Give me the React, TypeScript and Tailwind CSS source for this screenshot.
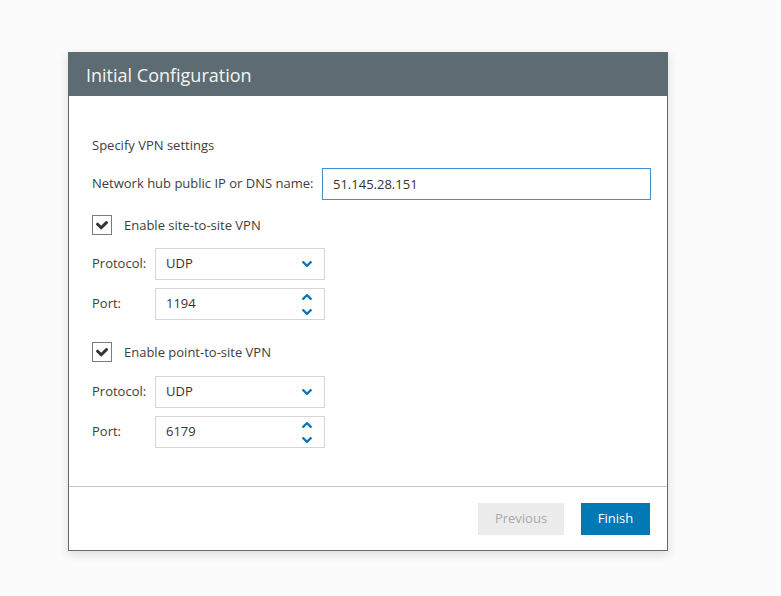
import React, { useState } from "react";

const font = { fontFamily: '"Open Sans", "Liberation Sans", sans-serif' };

function ChevronDown() {
  return (
    <svg width="10" height="6" viewBox="0 0 10 6" fill="none">
      <path d="M1.2 1.2 L5 4.8 L8.8 1.2" stroke="#0b78b8" strokeWidth="2.3" strokeLinecap="round" strokeLinejoin="round" />
    </svg>
  );
}

function ChevronUp() {
  return (
    <svg width="10" height="6" viewBox="0 0 10 6" fill="none">
      <path d="M1.2 4.8 L5 1.2 L8.8 4.8" stroke="#0b78b8" strokeWidth="2.3" strokeLinecap="round" strokeLinejoin="round" />
    </svg>
  );
}

function Checkbox({ checked, onChange, label }: { checked: boolean; onChange: () => void; label: string }) {
  return (
    <label className="flex items-center h-[20px] cursor-pointer select-none" onClick={onChange}>
      <span className="w-[20px] h-[20px] border border-[#7b7b7b] bg-white flex items-center justify-center">
        {checked && (
          <svg width="12" height="9" viewBox="0 0 12 9" fill="none">
            <path d="M1.6 3.2 L5.2 6.8 L10.4 1.6" stroke="#333333" strokeWidth="3" strokeLinecap="round" strokeLinejoin="round" />
          </svg>
        )}
      </span>
      <span className="ml-[12px] text-[13px] text-[#3d3d3d] leading-[18px]">{label}</span>
    </label>
  );
}

function ProtocolRow({ value }: { value: string }) {
  return (
    <div className="flex items-center">
      <span className="w-[63px] text-[13px] text-[#3d3d3d]">Protocol:</span>
      <div className="w-[170px] h-[32px] border border-[#d6d6d6] bg-white flex items-center justify-between pl-[10px] pr-[12px]">
        <span className="text-[13px] text-[#333]">{value}</span>
        <ChevronDown />
      </div>
    </div>
  );
}

function PortRow({ value }: { value: string }) {
  return (
    <div className="flex items-center">
      <span className="w-[63px] text-[13px] text-[#3d3d3d]">Port:</span>
      <div className="w-[170px] h-[32px] border border-[#d6d6d6] bg-white flex items-center justify-between pl-[10px] pr-[12px]">
        <span className="text-[13px] text-[#333]">{value}</span>
        <div className="flex flex-col gap-[9px] pt-[1px]">
          <ChevronUp />
          <ChevronDown />
        </div>
      </div>
    </div>
  );
}

export default function App() {
  const [siteToSite, setSiteToSite] = useState(true);
  const [pointToSite, setPointToSite] = useState(true);

  return (
    <div className="w-[781px] h-[596px] bg-[#fbfbfb] pl-[68px] pt-[52px]" style={font}>
      <div className="w-[600px] h-[499px] border border-[#5d6b72] bg-white flex flex-col shadow-[0_3px_10px_rgba(0,0,0,0.13)]">
        {/* Header */}
        <div className="h-[43px] bg-[#5d6b72] flex items-center px-[17px]">
          <h1 className="text-[18px] text-[#f3f5f6] leading-none">Initial Configuration</h1>
        </div>

        {/* Body */}
        <div className="h-[390px] pt-[40px] pl-[23px] pr-[16px] flex flex-col">
          <p className="text-[13px] leading-[18px] text-[#3d3d3d]">Specify VPN settings</p>

          <div className="flex items-center mt-[14px]">
            <span className="w-[230px] text-[13px] text-[#3d3d3d]">Network hub public IP or DNS name:</span>
            <input
              defaultValue="51.145.28.151"
              className="flex-1 h-[32px] border border-[#3a8fd5] px-[10px] text-[13px] text-[#333] outline-none"
            />
          </div>

          <div className="mt-[15px]">
            <Checkbox checked={siteToSite} onChange={() => setSiteToSite(!siteToSite)} label="Enable site-to-site VPN" />
          </div>
          <div className="mt-[13px]">
            <ProtocolRow value="UDP" />
          </div>
          <div className="mt-[8px]">
            <PortRow value="1194" />
          </div>

          <div className="mt-[22px]">
            <Checkbox checked={pointToSite} onChange={() => setPointToSite(!pointToSite)} label="Enable point-to-site VPN" />
          </div>
          <div className="mt-[14px]">
            <ProtocolRow value="UDP" />
          </div>
          <div className="mt-[8px]">
            <PortRow value="6179" />
          </div>
        </div>

        {/* Footer */}
        <div className="border-t border-[#c4c4c4] flex-1 flex justify-end items-start pt-[16px] pr-[17px] gap-[17px]">
          <button type="button" disabled className="w-[86px] h-[32px] bg-[#ececec] text-[13px] text-[#a9a9a9]">
            Previous
          </button>
          <button type="button" className="w-[69px] h-[32px] bg-[#0079b6] text-[13px] text-white">
            Finish
          </button>
        </div>
      </div>
    </div>
  );
}
